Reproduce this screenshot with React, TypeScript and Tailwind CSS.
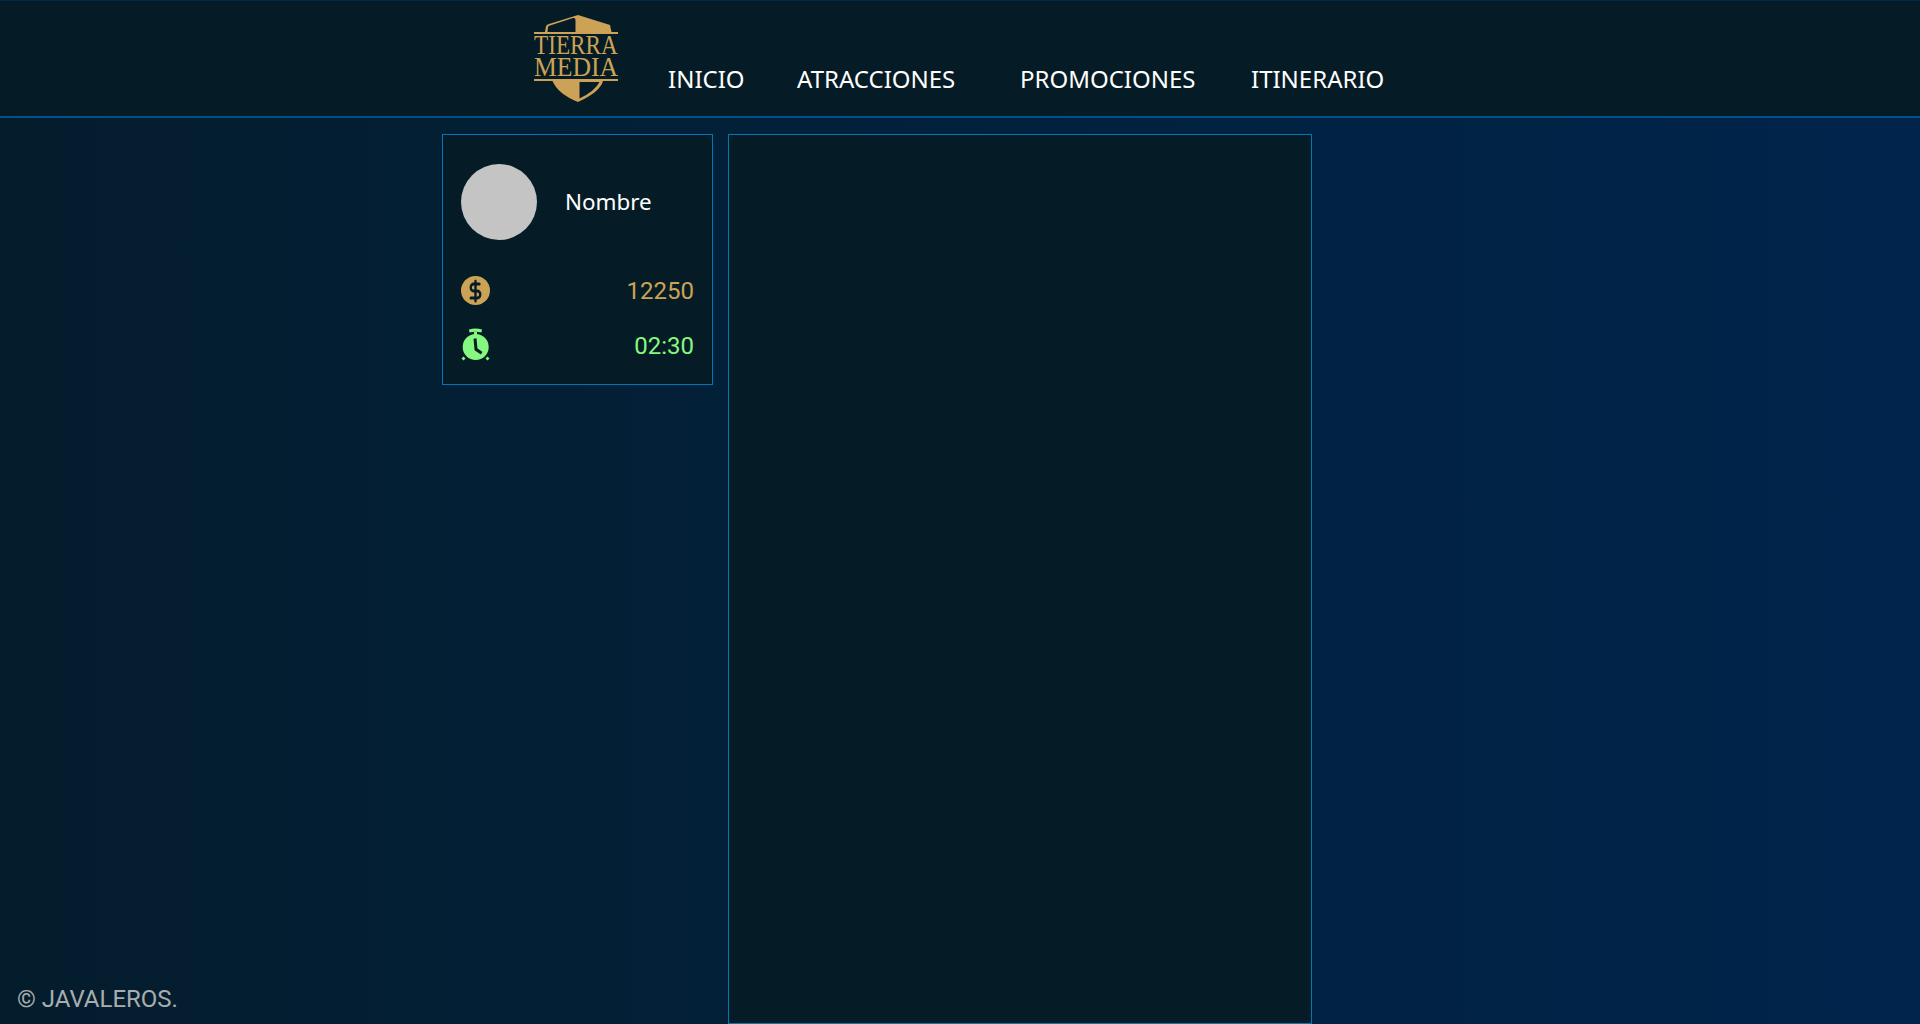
import { DollarSign } from 'lucide-react';

function Logo() {
    return (
        <div className="w-[84px] shrink-0 flex flex-col text-[#cca356] font-['Liberation_Serif',serif] text-[27px]">
            <svg width="84" height="18" viewBox="24 14 84 18" className="block">
                <path d="M35 32 L36 26 Q37 24.500 39 24 L68 15 L100 25 L101.500 32 Z" fill="#cca356" />
                <path d="M37.500 32 L38 27 Q38.500 25.800 40 25.500 L63 18 Q65.500 17.500 65.500 20 L65.500 32 Z" fill="#051c26" />
            </svg>
            <div className="h-[2px] bg-[#cca356]"></div>
            <div className="h-[22px] leading-[22px] whitespace-nowrap origin-left scale-x-[0.86]">TIERRA</div>
            <div className="h-[22px] leading-[22px] whitespace-nowrap origin-left scale-x-[0.95]">MEDIA</div>
            <div className="h-[2px] mt-[1px] bg-[#cca356]"></div>
            <svg width="84" height="22" viewBox="24 81 84 22" className="block">
                <path d="M42.500 81 L93 81 Q90 92 68 102 Q48 94 42.500 81 Z" fill="#cca356" />
                <path d="M69.500 82 L89.500 82 Q85 91 69.500 98.500 Z" fill="#051c26" />
            </svg>
        </div>
    );
}

function ClockIcon() {
    return (
        <svg width="30" height="33" viewBox="0 0 30 33" className="shrink-0">
            <path d="M8 1.500 Q14.500 -0.500 21 1.500 L20.500 4.500 Q14.500 3 8.500 4.500 Z" fill="#85f97f" />
            <rect x="13" y="4" width="3" height="3" fill="#85f97f" />
            <circle cx="14.700" cy="19" r="13" fill="#85f97f" />
            <path d="M14 10.500 L15 21.300 L20.700 25.300" fill="none" stroke="#051c26" strokeWidth="3" />
            <path d="M2.500 28.500 L4.500 30.500 L2.500 32.500 L0.500 30.500 Z M26.500 28.500 L28.500 30.500 L26.500 32.500 L24.500 30.500 Z" fill="#85f97f" />
        </svg>
    );
}

export default function App() {
    return (
        <div className="relative h-[1024px] overflow-hidden bg-gradient-to-r from-[#041d2d] to-[#00244c] font-['Roboto',sans-serif] text-white">
            {/* Header */}
            <header className="h-[118px] flex items-start pl-[534px] pt-[13px] bg-[#051c26] border-t border-[#00284f] border-b-2 border-b-[#00508a] font-['Noto_Sans',sans-serif] text-[24px]">
                <Logo />
                <nav className="flex items-center h-[30px] mt-[50px] ml-[50px] leading-none">
                    <a className="w-[129px]">INICIO</a>
                    <a className="w-[223px]">ATRACCIONES</a>
                    <a className="w-[231px]">PROMOCIONES</a>
                    <a>ITINERARIO</a>
                </nav>
            </header>

            <div className="flex items-start gap-[15px] pl-[442px] pt-[16px]">
                {/* Perfil */}
                <aside className="w-[271px] h-[251px] pt-[29px] pl-[18px] pr-[18px] bg-[#051c26] border border-[#0077b8]">
                    <div className="flex items-center gap-[28px]">
                        <div className="w-[76px] h-[76px] rounded-full bg-[#c4c4c4]"></div>
                        <span className="mb-[1px] font-['Noto_Sans',sans-serif] text-[22.4px]">Nombre</span>
                    </div>
                    <div className="flex items-start justify-between h-[30px] mt-[36px] text-[24px] leading-[30px] text-[#cca356]">
                        <div className="w-[29px] h-[29px] rounded-full bg-[#cca356] flex items-center justify-center">
                            <DollarSign className="w-[19px] h-[24px] text-[#051c26]" strokeWidth={3} preserveAspectRatio="none" />
                        </div>
                        <span>12250</span>
                    </div>
                    <div className="flex items-center justify-between h-[33px] mt-[22px] text-[24px] text-[#85f97f]">
                        <ClockIcon />
                        <span className="mt-[2px]">02:30</span>
                    </div>
                </aside>

                {/* Contenido */}
                <main className="w-[584px] h-[890px] bg-[#051c26] border border-[#0077b8]"></main>
            </div>

            <footer className="absolute left-[17px] bottom-[7px] text-[24px] leading-[36px] text-[#a9adb0]">© JAVALEROS.</footer>
        </div>
    );
}
